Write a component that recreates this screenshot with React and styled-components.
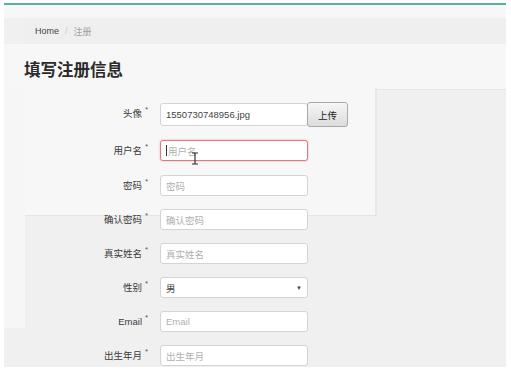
import React from 'react'
import styled, { createGlobalStyle } from 'styled-components'

const Global = createGlobalStyle`
    html, body {
        margin: 0;
        background: #ffffff;
        font-family: "Liberation Sans", "Noto Sans CJK SC", sans-serif;
    }
`

const Frame = styled.div`
    margin: 3px 0 0 4px;
    width: 502px;
    height: 362px;
    background: #f0f0f0;
    border-top: 2px solid #52b3a1;
    overflow: hidden;
`

const TopStrip = styled.div`
    height: 13px;
    background: #f7f7f7;
`

const Crumbs = styled.div`
    margin-left: 21px;
    height: 26px;
    background: #efefef;
    display: flex;
    align-items: center;
    gap: 6px;
    padding-left: 10px;
    font-size: 9px;
    color: #444;
`

const Slash = styled.span`
    color: #c8c8c8;
`

const Current = styled.span`
    color: #a0a0a0;
`

const HeadArea = styled.div`
    height: 45px;
    background: #f7f7f7;
    border-bottom: 1px solid #e6e6e6;
    display: flex;
    align-items: center;
    padding-left: 20px;
`

const Heading = styled.h1`
    margin: 4px 0 0;
    font-size: 16.5px;
    font-weight: bold;
    color: #2a2a2a;
`

const FormArea = styled.div`
    position: relative;
    padding-top: 13px;
`

const Ghost = styled.div`
    position: absolute;
    left: 21px;
    top: -2px;
    width: 350px;
    height: 127px;
    background: #f7f7f7;
    border-right: 2px solid #e8e8e8;
    border-bottom: 1px solid #e6e6e6;
`

const SideGhost = styled.div`
    position: absolute;
    left: 0;
    top: -2px;
    width: 21px;
    height: 240px;
    background: #f6f6f6;
`

const Row = styled.div`
    position: relative;
    display: flex;
    align-items: flex-start;
    height: ${p => p.$h || 34}px;
`

const Label = styled.label`
    width: 138px;
    height: 21px;
    line-height: 21px;
    text-align: right;
    font-size: 9.5px;
    color: #3a3a3a;
`

const Star = styled.span`
    width: 18px;
    padding-left: 3px;
    font-size: 8px;
    line-height: 14px;
    color: #555;
    box-sizing: border-box;
`

const Input = styled.div`
    box-sizing: border-box;
    width: 148px;
    height: ${p => p.$h || 21}px;
    border: 1px solid ${p => (p.$focus ? '#e07a7a' : '#d4d4d4')};
    box-shadow: ${p => (p.$focus ? '0 0 2px rgba(220,90,90,0.5)' : 'none')};
    border-radius: 3px;
    background: #fff;
    padding: 0 5px;
    display: flex;
    align-items: center;
    justify-content: space-between;
    font-size: 9.5px;
    color: ${p => (p.$placeholder ? '#b0b0b0' : '#444')};
`

const Typed = styled.span`
    display: flex;
    align-items: center;
    gap: 1px;
`

const Caret = styled.span`
    width: 1px;
    height: 11px;
    background: #333;
`

const Arrow = styled.span`
    font-size: 6px;
    color: #444;
`

const Upload = styled.button`
    margin: -1px 0 0 -1px;
    width: 41px;
    height: 25px;
    border: 1px solid #a9a9a9;
    border-radius: 3px;
    background: linear-gradient(#f6f6f6, #dcdcdc);
    font-family: inherit;
    font-size: 9.5px;
    color: #222;
    padding: 0;
`

const Cursor = styled.svg`
    position: absolute;
    left: 187px;
    top: 12px;
`

const fields = [
    { label: '确认密码', ph: '确认密码' },
    { label: '真实姓名', ph: '真实姓名' },
    { label: '性别', value: '男', select: true },
    { label: 'Email', ph: 'Email' },
    { label: '出生年月', ph: '出生年月' },
]

const App = () => (
    <>
        <Global />
        <Frame>
            <TopStrip />
            <Crumbs>
                <span>Home</span>
                <Slash>/</Slash>
                <Current>注册</Current>
            </Crumbs>
            <HeadArea>
                <Heading>填写注册信息</Heading>
            </HeadArea>
            <FormArea>
                <SideGhost />
                <Ghost />
                <Row $h={37}>
                    <Label>头像</Label>
                    <Star>*</Star>
                    <Input $h={23}>1550730748956.jpg</Input>
                    <Upload>上传</Upload>
                </Row>
                <Row $h={35}>
                    <Label>用户名</Label>
                    <Star>*</Star>
                    <Input $focus $placeholder>
                        <Typed>
                            <Caret />用户名
                        </Typed>
                    </Input>
                    <Cursor width="8" height="13" viewBox="0 0 8 13">
                        <path d="M1 1h6M4 1v11M1 12h6" stroke="#333" strokeWidth="1.2" fill="none" />
                    </Cursor>
                </Row>
                <Row>
                    <Label>密码</Label>
                    <Star>*</Star>
                    <Input $placeholder>密码</Input>
                </Row>
                {fields.map(f => (
                    <Row key={f.label}>
                        <Label>{f.label}</Label>
                        <Star>*</Star>
                        <Input $placeholder={!f.select}>
                            {f.select ? f.value : f.ph}
                            {f.select && <Arrow>▼</Arrow>}
                        </Input>
                    </Row>
                ))}
            </FormArea>
        </Frame>
    </>
)

export default App
